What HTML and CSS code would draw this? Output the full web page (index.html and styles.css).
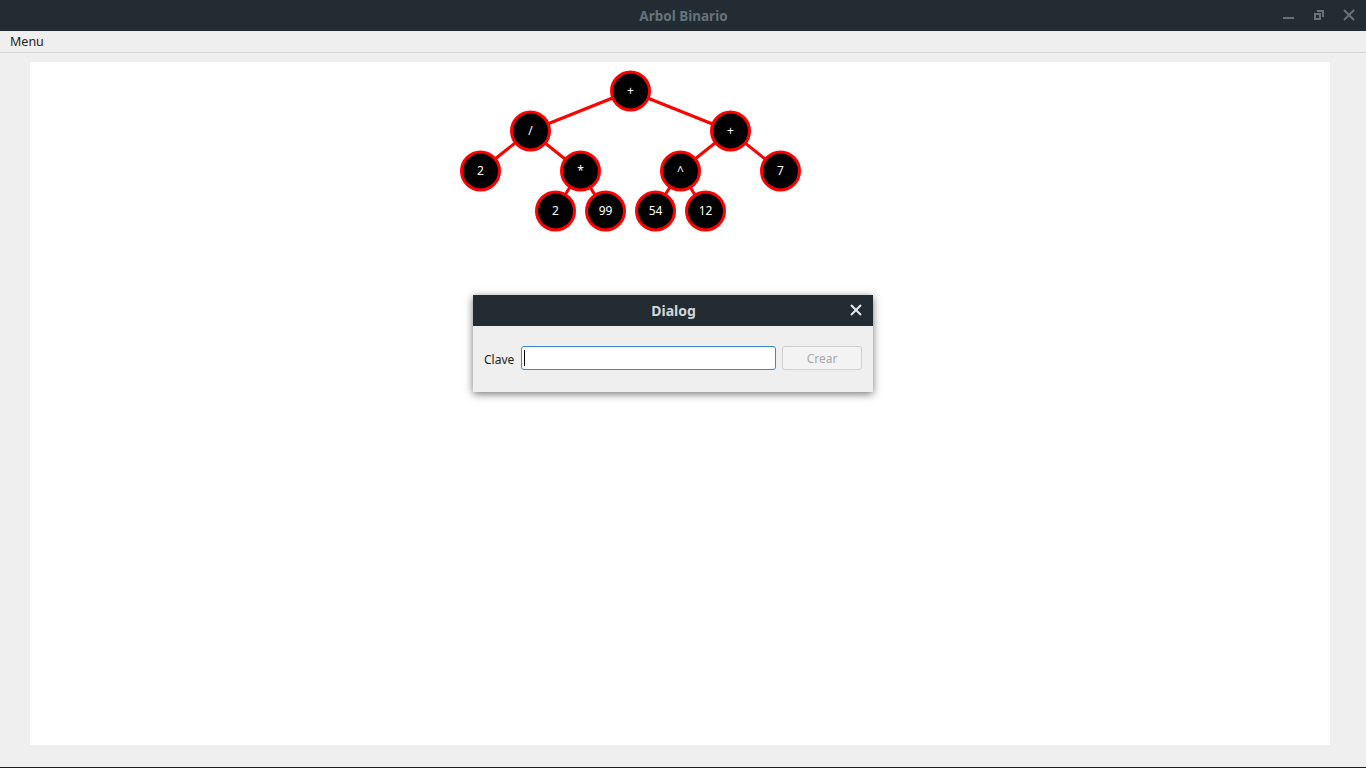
FILE: index.html
```html
<!DOCTYPE html>
<html>
<head>
<meta charset="utf-8">
<link rel="stylesheet" href="styles.css">
</head>
<body>
<div class="app">
  <header class="titlebar">
    <div class="title">Arbol Binario</div>
    <div class="controls">
      <svg class="ctl" width="14" height="14" viewBox="0 0 14 14"><rect x="1" y="9" width="11" height="2" fill="#66737a"/></svg>
      <svg class="ctl" width="14" height="14" viewBox="0 0 14 14"><path d="M5 2h7v7h-2V4H5z" fill="#66737a"/><rect x="2" y="5" width="7" height="7" fill="#66737a"/><rect x="4" y="7" width="3" height="3" fill="#222c32"/></svg>
      <svg class="ctl" width="14" height="14" viewBox="0 0 14 14"><path d="M2 2L12 12M12 2L2 12" stroke="#66737a" stroke-width="2"/></svg>
    </div>
  </header>
  <nav class="menubar"><span class="menu-item">Menu</span></nav>
  <main class="content">
    <div class="panel">
      <svg class="tree" width="1300" height="200" viewBox="30 62 1300 200">
        <g stroke="#ff0000" stroke-width="3">
          <line x1="630" y1="91" x2="530" y2="131"/>
          <line x1="630" y1="91" x2="730" y2="131"/>
          <line x1="530" y1="131" x2="480" y2="171"/>
          <line x1="530" y1="131" x2="580" y2="171"/>
          <line x1="730" y1="131" x2="680" y2="171"/>
          <line x1="730" y1="131" x2="780" y2="171"/>
          <line x1="580" y1="171" x2="555" y2="211"/>
          <line x1="580" y1="171" x2="605" y2="211"/>
          <line x1="680" y1="171" x2="655" y2="211"/>
          <line x1="680" y1="171" x2="705" y2="211"/>
        </g>
        <g fill="#000" stroke="#ff0000" stroke-width="3">
          <circle cx="630.5" cy="91" r="19"/>
          <circle cx="530.5" cy="131" r="19"/>
          <circle cx="730.5" cy="131" r="19"/>
          <circle cx="480.5" cy="171" r="19"/>
          <circle cx="580.5" cy="171" r="19"/>
          <circle cx="680.5" cy="171" r="19"/>
          <circle cx="780.5" cy="171" r="19"/>
          <circle cx="555.5" cy="211" r="19"/>
          <circle cx="605.5" cy="211" r="19"/>
          <circle cx="655.5" cy="211" r="19"/>
          <circle cx="705.5" cy="211" r="19"/>
        </g>
        <g class="labels" fill="#fff" text-anchor="middle">
          <text x="630.5" y="95">+</text>
          <text x="530.5" y="135">/</text>
          <text x="730.5" y="135">+</text>
          <text x="480.5" y="175">2</text>
          <text x="580.5" y="175">*</text>
          <text x="680.5" y="175">^</text>
          <text x="780.5" y="175">7</text>
          <text x="555.5" y="215">2</text>
          <text x="605.5" y="215">99</text>
          <text x="655.5" y="215">54</text>
          <text x="705.5" y="215">12</text>
        </g>
      </svg>
    </div>
  </main>
  <div class="bottomline"></div>

  <div class="dialog">
    <div class="dlg-title">
      <span>Dialog</span>
      <svg class="dlg-close" width="12" height="12" viewBox="0 0 12 12"><path d="M1 1L11 11M11 1L1 11" stroke="#e6e9eb" stroke-width="2"/></svg>
    </div>
    <div class="dlg-body">
      <label class="lbl">Clave</label>
      <div class="input"><span class="caret"></span></div>
      <button class="btn">Crear</button>
    </div>
  </div>
</div>
</body>
</html>
```
FILE: styles.css
```css
* { box-sizing: border-box; }
html, body { margin: 0; padding: 0; }
body {
  width: 1366px;
  height: 768px;
  overflow: hidden;
  font-family: "Noto Sans", "Open Sans", sans-serif;
  background: #efefef;
}
.app {
  position: relative;
  width: 1366px;
  height: 768px;
  display: flex;
  flex-direction: column;
}
.titlebar {
  height: 31px;
  flex: none;
  background: #222c32;
  display: flex;
  align-items: center;
  justify-content: center;
  position: relative;
}
.title {
  color: #66737a;
  font-weight: bold;
  font-size: 13.5px;
  margin-left: 1px;
}
.controls {
  position: absolute;
  right: 10px;
  top: 8px;
  display: flex;
  gap: 16px;
}
.ctl { display: block; }
.menubar {
  height: 22px;
  flex: none;
  background: #efefef;
  border-bottom: 1px solid #d4d4d4;
  display: flex;
  align-items: center;
  padding-left: 10px;
}
.menu-item {
  font-size: 12.5px;
  color: #222;
  line-height: 20px;
}
.content {
  flex: 1;
  padding: 9px 36px 22px 30px;
  display: flex;
}
.panel {
  flex: 1;
  background: #fff;
  overflow: hidden;
}
.tree { display: block; }
.labels text {
  font-family: "Noto Sans", "Open Sans", sans-serif;
  font-size: 12px;
}
.bottomline {
  height: 1px;
  flex: none;
  background: #1e1e1e;
}
.dialog {
  position: absolute;
  left: 473px;
  top: 295px;
  width: 400px;
  height: 97px;
  background: #efefef;
  box-shadow: 0 2px 8px rgba(0,0,0,0.55);
  display: flex;
  flex-direction: column;
}
.dlg-title {
  height: 31px;
  background: #222c32;
  display: flex;
  align-items: center;
  justify-content: center;
  position: relative;
  color: #d2d7da;
  font-weight: bold;
  font-size: 14px;
}
.dlg-title span { margin-left: 1px; }
.dlg-close {
  position: absolute;
  right: 11px;
  top: 9px;
}
.dlg-body {
  flex: 1;
  display: flex;
  align-items: center;
  padding: 0 11px 2px 11px;
}
.lbl {
  font-size: 12px;
  color: #222;
  margin-right: 8px;
  margin-top: 2px;
}
.input {
  width: 255px;
  height: 24px;
  background: #fff;
  border: 1px solid #3d8ac7;
  border-radius: 3px;
  position: relative;
  margin-right: 6px;
  margin-left: -1px;
}
.caret {
  position: absolute;
  left: 2px;
  top: 3px;
  width: 1px;
  height: 16px;
  background: #000;
}
.btn {
  width: 80px;
  height: 24px;
  background: #f3f3f3;
  border: 1px solid #cfcfcf;
  border-radius: 3px;
  color: #a8a8a8;
  font-family: "Noto Sans", "Open Sans", sans-serif;
  font-size: 12px;
  padding: 0;
}
```
